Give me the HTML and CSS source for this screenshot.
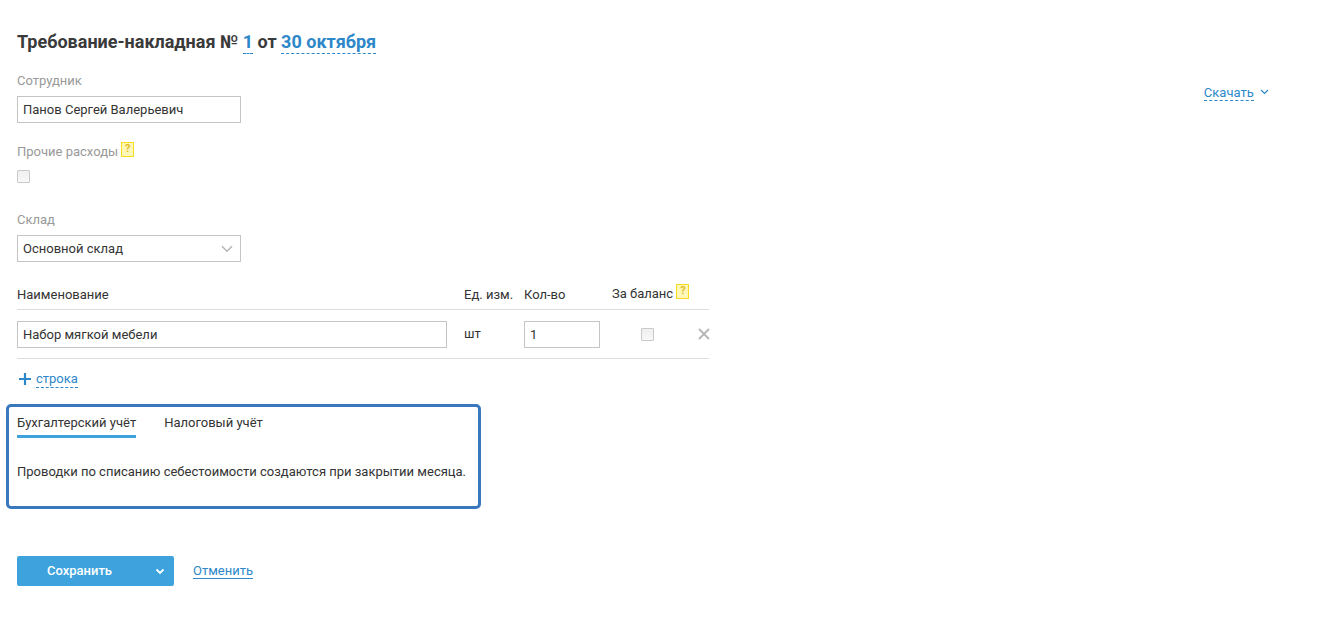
FILE: index.html
```html
<!DOCTYPE html>
<html lang="ru">
<head>
<meta charset="utf-8">
<title>Требование-накладная</title>
<link rel="stylesheet" href="styles.css">
</head>
<body>
<div class="page">
  <main class="form">
    <h1 class="title">Требование-накладная № <span class="dash">1</span> от <span class="dash">30 октября</span></h1>

    <div class="label first">Сотрудник</div>
    <div class="input wide">Панов Сергей Валерьевич</div>

    <div class="label other">Прочие расходы <span class="hint">?</span></div>
    <div class="check"></div>

    <div class="label store">Склад</div>
    <div class="input wide select">Основной склад
      <svg class="sel-arrow" width="12" height="8" viewBox="0 0 12 8"><path d="M1 1.2 6 6.2 11 1.2" fill="none" stroke="#b4b4b4" stroke-width="1.5"/></svg>
    </div>

    <div class="table">
      <div class="row head">
        <div class="c-name">Наименование</div>
        <div class="c-unit">Ед. изм.</div>
        <div class="c-qty">Кол-во</div>
        <div class="c-bal">За баланс <span class="hint">?</span></div>
      </div>
      <div class="row body">
        <div class="c-name"><div class="input name">Набор мягкой мебели</div></div>
        <div class="c-unit">шт</div>
        <div class="c-qty"><div class="input qty">1</div></div>
        <div class="c-bal"><div class="check"></div></div>
        <svg class="del" width="12" height="12" viewBox="0 0 12 12"><path d="M1 1 11 11M11 1 1 11" stroke="#b5b5b5" stroke-width="1.8" fill="none"/></svg>
      </div>
    </div>

    <div class="add">
      <svg width="14" height="14" viewBox="0 0 14 14"><path d="M7 1V13M1 7H13" stroke="#2d87c8" stroke-width="2.2" fill="none"/></svg>
      <span class="dash">строка</span>
    </div>

    <section class="panel">
      <div class="tabs">
        <div class="tab active">Бухгалтерский учёт</div>
        <div class="tab">Налоговый учёт</div>
      </div>
      <p class="note">Проводки по списанию себестоимости создаются при закрытии месяца.</p>
    </section>

    <div class="actions">
      <div class="save">
        <span class="save-text">Сохранить</span>
        <span class="save-arrow"><svg width="10" height="7" viewBox="0 0 10 7"><path d="M1.5 1.5 5 5 8.5 1.5" fill="none" stroke="#fff" stroke-width="1.8"/></svg></span>
      </div>
      <a class="cancel">Отменить</a>
    </div>
  </main>
  <div class="download">
    <span class="dash">Скачать</span>
    <svg width="9" height="6" viewBox="0 0 9 6"><path d="M1 1 4.5 4.5 8 1" fill="none" stroke="#2d87c8" stroke-width="1.2"/></svg>
  </div>
</div>
</body>
</html>
```
FILE: styles.css
```css
* { box-sizing: border-box; }
html, body { margin: 0; height: 100%; background: #fff; overflow: hidden; }
body { font: 13px/16px Roboto, "Liberation Sans", sans-serif; color: #333; }
.page { display: flex; justify-content: space-between; padding: 0 64px 0 17px; }
.form { width: 692px; padding-top: 31px; }
.title { margin: 0; font-size: 18px; line-height: 22px; font-weight: 700; color: #3a3a3a; }
.dash { color: #2d87c8; border-bottom: 1px dashed #2d87c8; }
.title .dash { padding-bottom: 1px; }
.label { color: #999; line-height: 16px; }
.first { margin-top: 20px; }
.other { margin-top: 21px; }
.store { margin-top: 29px; }
.input { border: 1px solid #c4c4c4; height: 27px; line-height: 25px; padding: 0 5px; background: #fff; color: #333; }
.wide { width: 224px; margin-top: 7px; }
.select { position: relative; }
.sel-arrow { position: absolute; right: 7px; top: 9px; }
.hint { display: inline-block; position: relative; top: -4px; width: 13px; height: 15px; margin-left: 0; background: #fff7b8; border: 1px solid #f5dc1e; color: #e0bd2c; font-size: 11px; font-weight: 700; line-height: 12px; text-align: center; }
.check { width: 13px; height: 13px; border: 1px solid #c9c9c9; border-radius: 1px; background: linear-gradient(#efefef, #f8f8f8); }
.other + .check { margin-top: 9px; }
.table { margin-top: 23px; }
.row { display: flex; align-items: center; position: relative; border-bottom: 1px solid #dedede; }
.head { height: 25px; padding-bottom: 5px; }
.body { height: 49px; }
.c-name { width: 447px; }
.c-unit { width: 60px; }
.c-qty { width: 88px; }
.c-bal { white-space: nowrap; }
.body .c-bal { width: 70px; display: flex; justify-content: center; padding-right: 0; }
.input.name { width: 430px; }
.input.qty { width: 76px; }
.del { position: absolute; left: 681px; top: 18px; }
.add { display: flex; align-items: center; gap: 4px; margin-top: 12px; height: 16px; padding-left: 1px; }
.panel { margin: 17px 0 0 -11px; width: 475px; height: 105px; border: 3px solid #3a78bd; border-radius: 5px; padding: 0 8px; }
.tabs { display: flex; gap: 28px; }
.tab { padding-top: 8px; height: 31px; color: #333; }
.tab.active { border-bottom: 3px solid #3ea3dd; }
.note { margin: 26px 0 0; }
.actions { display: flex; align-items: center; margin-top: 47px; gap: 19px; }
.save { display: flex; width: 157px; height: 30px; background: #3ea3dd; border-radius: 2px; color: #fff; font-weight: 500; line-height: 30px; }
.save-text { width: 125px; text-align: center; }
.save-arrow { flex: 1; display: flex; align-items: center; justify-content: center; padding-left: 4px; }
.cancel { color: #2d87c8; border-bottom: 1px solid #2d87c8; line-height: 15px; }
.download { margin-top: 85px; height: 17px; white-space: nowrap; }
.download svg { margin-left: 3px; vertical-align: 2px; }
```
